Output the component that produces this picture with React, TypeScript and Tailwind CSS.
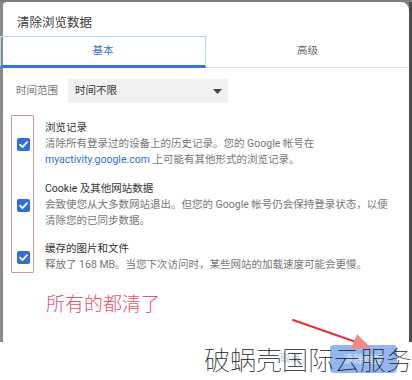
import React from "react";

const font = { fontFamily: "Roboto, 'Noto Sans CJK SC', sans-serif" };

function Check() {
  return (
    <div className="w-[13px] h-[13px] rounded-[2px] bg-[#2f6fd6] flex items-center justify-center shrink-0">
      <svg width="11" height="11" viewBox="0 0 12 12">
        <path d="M2.2 6.2 L4.9 8.8 L9.8 3.4" stroke="white" strokeWidth="1.9" fill="none" strokeLinecap="round" strokeLinejoin="round" />
      </svg>
    </div>
  );
}

function Item({ title, children, className }: { title: string; children: React.ReactNode; className?: string }) {
  return (
    <div className={"flex items-center " + (className || "")}>
      <div className="w-[42px] pl-[14px] flex">
        <Check />
      </div>
      <div className="text-[10.5px] leading-[16px] flex flex-col">
        <div className="text-[#333]">{title}</div>
        <div className="text-[#777]">{children}</div>
      </div>
    </div>
  );
}

export default function App() {
  return (
    <div className="relative w-[412px] h-[380px] overflow-hidden bg-white" style={font}>
      <div className="h-[342px] flex flex-col bg-[#7d7d7d]">
        <div className="h-[2px] shrink-0" />
        <div className="flex-1 flex">
          <div className="w-[3px] shrink-0 bg-[#8a8a8a]" />
          <div className="flex-1 bg-white rounded-tl-[4px] rounded-tr-[8px] flex flex-col">
            <div className="pl-[14px] pt-[12px] pb-[4px] text-[12.5px] leading-[18px] text-[#3a3a3a]">清除浏览数据</div>
            <div className="flex h-[32px] -ml-[3px]">
              <div className="w-[206px] border-t border-l border-r border-[#b5d7f2] border-b-[3px] border-b-[#3a74d4] flex items-center justify-center text-[10.5px] text-[#3a72cc]">
                基本
              </div>
              <div className="flex-1 border-b border-[#e3e3e3] flex items-center justify-center text-[10.5px] text-[#666] pb-[1px]">
                高级
              </div>
            </div>
            <div className="flex items-center mt-[11px] pl-[13px]">
              <div className="text-[10.5px] text-[#777] w-[52px]">时间范围</div>
              <div className="w-[160px] h-[24px] bg-[#f1f1f1] flex items-center justify-between pl-[7px] pr-[6px]">
                <span className="text-[10.5px] text-[#333]">时间不限</span>
                <svg width="9" height="5" viewBox="0 0 9 5">
                  <path d="M0 0 L9 0 L4.5 5 Z" fill="#444" />
                </svg>
              </div>
            </div>
            <Item title="浏览记录" className="mt-[17px]">
              清除所有登录过的设备上的历史记录。您的 Google 帐号在
              <br />
              <span className="text-[#2f6fd6]">myactivity.google.com</span> 上可能有其他形式的浏览记录。
            </Item>
            <Item title="Cookie 及其他网站数据" className="mt-[13px]">
              会致使您从大多数网站退出。但您的 Google 帐号仍会保持登录状态，以便
              <br />
              清除您的已同步数据。
            </Item>
            <Item title="缓存的图片和文件" className="mt-[12px]">
              释放了 168 MB。当您下次访问时，某些网站的加载速度可能会更慢。
            </Item>
            <div className="mt-[20px] pl-[43px] text-[19px] leading-[24px] font-light text-[#e2546c]">所有的都清了</div>
          </div>
          <div className="w-[3px] shrink-0 bg-[#4d4d4d]" />
        </div>
      </div>
      <div className="flex items-start justify-end pr-[15px] pt-[3px] gap-[30px]">
        <div className="text-[10px] leading-[28px] text-[#b8cbe6]">取消</div>
        <div className="w-[67px] h-[28px] rounded-[4px] bg-[#93b6f0] flex items-center justify-center text-[10px] text-[#dfe9fb]">
          清除数据
        </div>
      </div>

      {/* annotation: red rectangle around checkboxes */}
      <div className="absolute left-[11px] top-[115px] w-[23px] h-[158px] border border-[#c99c9c] rounded-[1px]" />

      {/* annotation: red arrow */}
      <svg className="absolute left-0 top-0" width="412" height="380" viewBox="0 0 412 380">
        <path d="M293 320 L356 342" stroke="#e0303a" strokeWidth="2" strokeLinecap="round" />
        <path d="M371 348 L351 349 L357 334 Z" fill="#f08a8a" />
      </svg>

      {/* watermark */}
      <div
        className="absolute left-[204px] top-[343px] text-[26px] leading-[32px] font-thin text-[#1a1a1a] whitespace-nowrap"
        style={{ fontFamily: "'Noto Sans CJK SC', sans-serif" }}
      >
        破蜗壳国际云服务
      </div>
    </div>
  );
}
